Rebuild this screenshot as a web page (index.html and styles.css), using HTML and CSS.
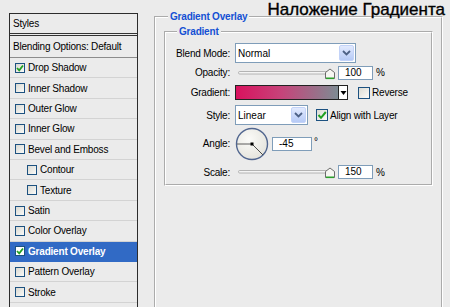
FILE: index.html
```html
<!DOCTYPE html>
<html lang="ru">
<head>
  <meta charset="UTF-8">
  <meta name="viewport" content="width=device-width, initial-scale=1.0">
  <title>Layer Style - Gradient Overlay</title>
  <link rel="stylesheet" href="styles.css">
</head>
<body>

<div class="dialog">
  <ul class="styles-list">
    <li class="head">Styles</li>
    <li class="blend">Blending Options: Default</li>
    <li><span class="cb"><svg width="8" height="8" viewBox="0 0 8 8"><path d="M1 4 L3.2 6.3 L7 1.5" fill="none" stroke="#21a121" stroke-width="1.8"/></svg></span>Drop Shadow</li>
    <li><span class="cb"></span>Inner Shadow</li>
    <li><span class="cb"></span>Outer Glow</li>
    <li><span class="cb"></span>Inner Glow</li>
    <li><span class="cb"></span>Bevel and Emboss</li>
    <li class="sub"><span class="cb"></span>Contour</li>
    <li class="sub"><span class="cb"></span>Texture</li>
    <li><span class="cb"></span>Satin</li>
    <li><span class="cb"></span>Color Overlay</li>
    <li class="selected"><span class="cb"><svg width="8" height="8" viewBox="0 0 8 8"><path d="M1 4 L3.2 6.3 L7 1.5" fill="none" stroke="#21a121" stroke-width="1.8"/></svg></span>Gradient Overlay</li>
    <li><span class="cb"></span>Pattern Overlay</li>
    <li><span class="cb"></span>Stroke</li>
    <li></li>
  </ul>

  <fieldset class="group outer">
    <legend>Gradient Overlay</legend>
    <fieldset class="group inner">
      <legend>Gradient</legend>
      <div class="form">
        <label>Blend Mode:</label>
        <div class="ctl">
          <div class="select wide"><span>Normal</span><i class="drop"><svg width="9" height="6" viewBox="0 0 9 6"><path d="M1 1 L4.5 4.5 L8 1" fill="none" stroke="#4d6185" stroke-width="1.8"/></svg></i></div>
        </div>

        <label>Opacity:</label>
        <div class="ctl">
          <svg class="slider" width="101" height="14" viewBox="0 0 101 14">
            <rect x="3.5" y="5.5" width="90" height="2.5" rx="1.2" fill="#f4f4f4" stroke="#a3a3a3" stroke-width="0.8"/>
            <path d="M90.5 12.5 V6.5 L95 3 L99.5 6.5 V12.5 Z" fill="#f6f6f2" stroke="#5c5c5c" stroke-width="0.9"/>
            <path d="M91 12.3 H99" stroke="#2ba02b" stroke-width="1.6"/>
          </svg>
          <div class="num">100</div>
          <span class="unit">%</span>
        </div>

        <label>Gradient:</label>
        <div class="ctl">
          <div class="swatch"><div class="fill"></div><div class="arrow"><svg width="7" height="4" viewBox="0 0 7 4"><path d="M0.5 0 H6.5 L3.5 4 Z" fill="#000"/></svg></div></div>
          <span class="check gap-reverse"></span><span class="cap">Reverse</span>
        </div>

        <label>Style:</label>
        <div class="ctl">
          <div class="select narrow"><span>Linear</span><i class="drop"><svg width="9" height="6" viewBox="0 0 9 6"><path d="M1 1 L4.5 4.5 L8 1" fill="none" stroke="#4d6185" stroke-width="1.8"/></svg></i></div>
          <span class="check gap-align"><svg width="10" height="10" viewBox="0 0 10 10"><path d="M1.5 5 L4 7.8 L8.8 2" fill="none" stroke="#21a121" stroke-width="2"/></svg></span><span class="cap">Align with Layer</span>
        </div>

        <label>Angle:</label>
        <div class="ctl">
          <svg class="dial" width="34" height="34" viewBox="0 0 34 34">
            <defs>
              <radialGradient id="dialFill" cx="0.4" cy="0.35" r="0.7">
                <stop offset="0" stop-color="#fbfbf8"/>
                <stop offset="1" stop-color="#e4e3dc"/>
              </radialGradient>
            </defs>
            <circle cx="17" cy="17" r="15.5" fill="url(#dialFill)" stroke="#51668f" stroke-width="1.4"/>
            <path d="M17 17 H2" stroke="#4a4a4a" stroke-width="0.9"/>
            <path d="M17 17 L28 28" stroke="#4a4a4a" stroke-width="1"/>
            <rect x="15.5" y="15.5" width="3" height="3" fill="#000"/>
          </svg>
          <div class="num angle">-45</div>
          <span class="deg">°</span>
        </div>

        <label>Scale:</label>
        <div class="ctl">
          <svg class="slider" width="101" height="14" viewBox="0 0 101 14">
            <rect x="3.5" y="5.5" width="90" height="2.5" rx="1.2" fill="#f4f4f4" stroke="#a3a3a3" stroke-width="0.8"/>
            <path d="M90.5 12.5 V6.5 L95 3 L99.5 6.5 V12.5 Z" fill="#f6f6f2" stroke="#5c5c5c" stroke-width="0.9"/>
            <path d="M91 12.3 H99" stroke="#2ba02b" stroke-width="1.6"/>
          </svg>
          <div class="num">150</div>
          <span class="unit">%</span>
        </div>
      </div>
    </fieldset>
  </fieldset>
</div>

<div class="caption">Наложение Градиента</div>

</body>
</html>
```

FILE: styles.css
```css
body { margin: 0; width: 450px; height: 307px; overflow: hidden; position: relative; background: #ebebeb; font-family: "Liberation Sans", Arial, sans-serif; font-size: 10px; color: #000; }

.dialog { display: flex; align-items: flex-start; gap: 16px; height: 307px; overflow: hidden; box-sizing: border-box; padding: 11px 0 0 9px; }

/* styles list on the left */
.styles-list { list-style: none; margin: 2px 0 0; padding: 0; width: 129px; flex: none; box-sizing: border-box; border: 1px solid #2c2c2c; border-bottom: none; }
.styles-list li { height: 19.42px; border-bottom: 1px solid #d3d3d3; display: flex; align-items: center; padding-left: 5px; letter-spacing: -0.2px; white-space: nowrap; }
.styles-list li.head { height: 19px; border-bottom: 3px double #333; padding-left: 3px; }
.styles-list li.blend { height: 21px; border-bottom: 1px solid #8c8c8c; padding-left: 3px; }
.styles-list li.sub { padding-left: 17px; }
.styles-list li.selected { background: #316ac5; color: #fff; font-weight: bold; border-bottom-color: #316ac5; }

.cb { width: 10px; height: 10px; flex: none; box-sizing: border-box; margin-right: 3px; border: 1px solid #1c5180; background: linear-gradient(135deg, #d9d9d2, #fafaf8); display: flex; align-items: center; justify-content: center; }
.selected .cb { background: #fff; }

/* group boxes */
.group { margin: 0; min-width: 0; border: 2px groove #fff; box-sizing: border-box; }
.group legend { padding: 0 2px; line-height: 12px; color: #1450d4; font-weight: bold; letter-spacing: -0.2px; }
.outer { width: 289px; height: 320px; padding: 0 8px; flex: none; }
.outer > legend { margin-left: 4px; }
.inner { margin-top: 3px; padding: 5px 0 0 5px; }
.inner > legend { margin-left: 6px; }

.form { display: grid; grid-template-columns: 59px auto; grid-template-rows: 20px 19px 21px 24px 33px 24px; column-gap: 5px; align-items: center; }
.form label { text-align: right; letter-spacing: -0.2px; white-space: nowrap; }
.ctl { display: flex; align-items: center; }

.select { height: 20px; box-sizing: border-box; border: 1px solid #7f9db9; background: #fff; display: flex; align-items: center; padding-left: 2px; }
.select span { flex: 1; }
.select.wide { width: 121px; }
.select.narrow { width: 73px; }
.drop { width: 15px; height: 16px; margin-right: 1px; box-sizing: border-box; border: 1px solid #c3d3f8; border-radius: 2px; background: linear-gradient(#e2eafe, #b6caf6); display: flex; align-items: center; justify-content: center; }

.slider { display: block; flex: none; }
.num { width: 35px; height: 14px; box-sizing: border-box; border: 1px solid #7f9db9; background: #fff; padding-left: 6px; line-height: 12px; margin-left: 2px; }
.num.angle { width: 40px; margin-left: 3px; }
.unit { margin-left: 3px; }
.deg { margin-left: 2px; margin-top: -4px; }

.swatch { width: 113px; height: 15px; box-sizing: border-box; border: 1px solid #222; display: flex; }
.swatch .fill { flex: 1; background: linear-gradient(90deg, #d9125e, #c6447a 45%, #7e8b93); }
.swatch .arrow { width: 8px; border-left: 1px solid #222; background: #fff; display: flex; align-items: center; justify-content: center; }

.check { width: 12px; height: 12px; flex: none; box-sizing: border-box; border: 1px solid #1c5180; background: linear-gradient(135deg, #dcdcd5, #fbfbf9); display: flex; align-items: center; justify-content: center; }
.gap-reverse { margin-left: 10px; }
.gap-align { margin-left: 8px; }
.cap { margin-left: 2px; letter-spacing: -0.2px; white-space: nowrap; }

/* caption lettered over the screenshot */
.caption { position: absolute; top: 0; right: 5px; font-size: 17px; line-height: 20px; color: #000; -webkit-text-stroke: 0.35px #000; }
```
